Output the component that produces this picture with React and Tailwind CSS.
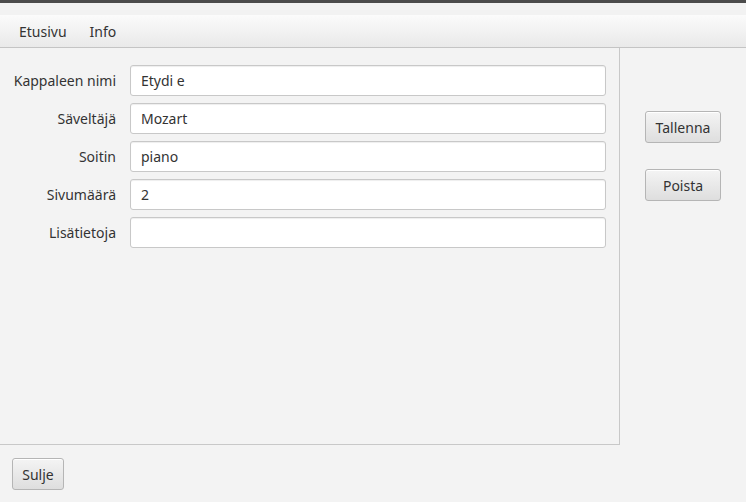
import React from 'react';

const fields = [
  ['Kappaleen nimi', 'Etydi e'],
  ['Säveltäjä', 'Mozart'],
  ['Soitin', 'piano'],
  ['Sivumäärä', '2'],
  ['Lisätietoja', ''],
];

const Btn = ({ children, className = '' }) => (
  <button
    className={`h-[32px] rounded-[3px] border border-[#b5b5b5] bg-gradient-to-b from-[#f4f4f4] to-[#dedede] text-[14px] text-[#333] shadow-[inset_0_1px_0_#fff] ${className}`}
  >
    {children}
  </button>
);

export default function App() {
  return (
    <div className="w-[746px] h-[502px] bg-[#f3f3f3] flex flex-col overflow-hidden text-[#333]" style={{ fontFamily: '"Noto Sans", "Open Sans", sans-serif' }}>
      <div className="h-[3px] bg-[#4b4b4b]" />
      <div className="h-[12px] bg-[#f2f2f2]" />
      <div className="h-[33px] flex items-center gap-[23px] px-[19px] bg-gradient-to-b from-[#fbfbfb] to-[#e9e9e9] border-b border-[#c4c4c4] text-[14px]">
        <span>Etusivu</span>
        <span>Info</span>
      </div>
      <div className="flex h-[397px]">
        <div className="w-[620px] border-r border-b border-[#c8c8c8] flex flex-col gap-[7px] pt-[17px]">
          {fields.map(([label, value]) => (
            <div key={label} className="flex items-center h-[31px]">
              <div className="w-[117px] pr-[1px] text-right text-[14px]">{label}</div>
              <div className="ml-[13px] w-[476px] h-[31px] rounded-[3px] border border-[#c8c8c8] bg-white shadow-[inset_0_1px_1px_#eee] flex items-center px-[10px] text-[14px]">
                {value}
              </div>
            </div>
          ))}
        </div>
        <div className="flex-1 flex flex-col items-center pt-[63px] gap-[26px]">
          <Btn className="w-[76px]">Tallenna</Btn>
          <Btn className="w-[76px]">Poista</Btn>
        </div>
      </div>
      <div className="pl-[12px] pt-[13px]">
        <Btn className="w-[52px]">Sulje</Btn>
      </div>
    </div>
  );
}
